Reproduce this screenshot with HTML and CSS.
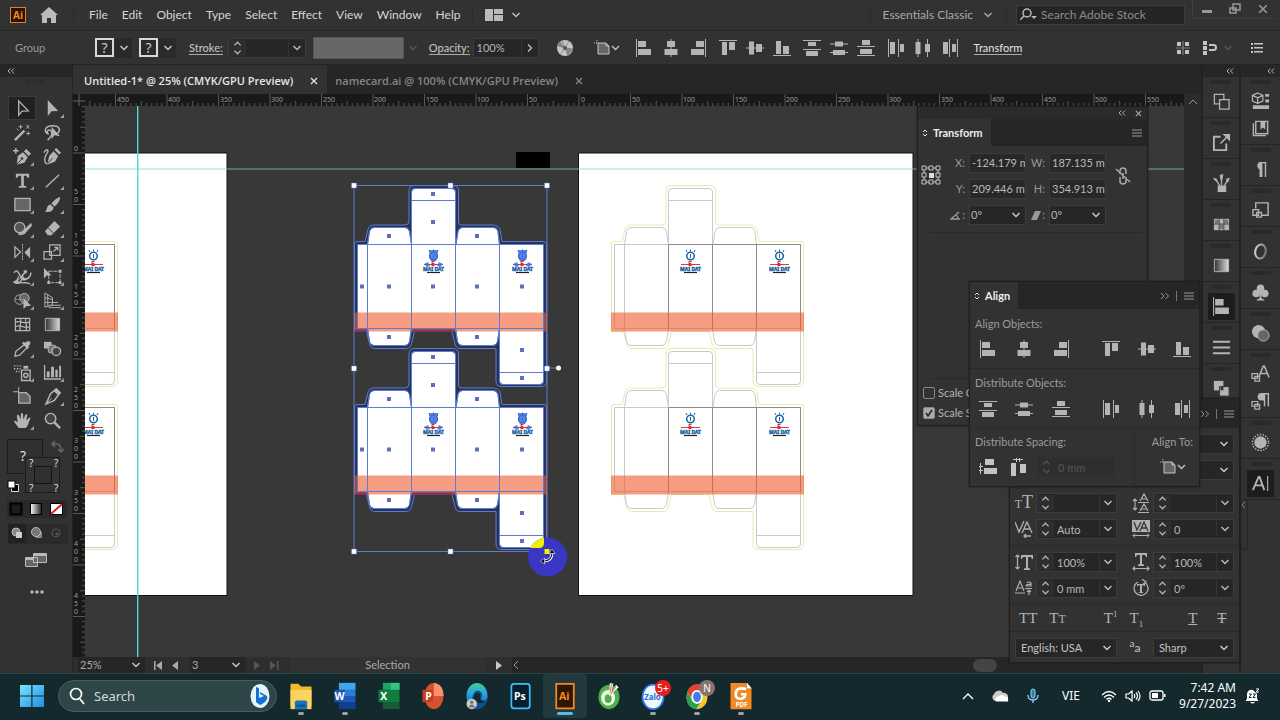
FILE: index.html
```
<!DOCTYPE html>
<html lang="en">
<head>
<meta charset="utf-8">
<title>Untitled-1* @ 25% (CMYK/GPU Preview)</title>
<link rel="stylesheet" href="styles.css">
</head>
<body>
<svg class="sprite" aria-hidden="true">
  <defs>
    <linearGradient id="grad"><stop offset="0" stop-color="#333"/><stop offset="1" stop-color="#ddd"/></linearGradient>
    <linearGradient id="gradw"><stop offset="0" stop-color="#fff"/><stop offset="1" stop-color="#222"/></linearGradient>
    <linearGradient id="grado"><stop offset="0" stop-color="#ccc"/><stop offset="1" stop-color="#777"/></linearGradient>
    <linearGradient id="win" x2="1" y2="1"><stop offset="0" stop-color="#7fe3fb"/><stop offset="1" stop-color="#1a8fe6"/></linearGradient>
    <linearGradient id="edge" x2="0" y2="1"><stop offset="0" stop-color="#3fcf8f"/><stop offset=".4" stop-color="#2ba6e0"/><stop offset="1" stop-color="#0c59a4"/></linearGradient>
  </defs>
  <symbol id="chev" viewBox="0 0 10 10"><path d="M1.5 3 5 6.5 8.500 3" fill="none" stroke="currentColor" stroke-width="1.5"/></symbol>
  <symbol id="spin" viewBox="0 0 10 18"><path d="M1.500 6 5 2.500 8.500 6M1.500 12 5 15.500 8.500 12" fill="none" stroke="currentColor" stroke-width="1.4"/></symbol>
  <symbol id="dbl-l" viewBox="0 0 8 6"><path d="M3.500.500 1 3l2.500 2.500M7 .500 4.500 3 7 5.500" fill="none" stroke="currentColor"/></symbol>
  <symbol id="dbl-r" viewBox="0 0 10 8"><path d="M1 1l3 3-3 3M5.500 1l3 3-3 3" fill="none" stroke="currentColor"/></symbol>
  <symbol id="cross" viewBox="0 0 8 8"><path d="M1 1l6 6M7 1 1 7" fill="none" stroke="currentColor" stroke-width="1.3"/></symbol>
  <symbol id="burger" viewBox="0 0 10 8"><path d="M0 1h10M0 4h10M0 7h10" stroke="currentColor"/></symbol>
  <symbol id="updown" viewBox="0 0 6 8"><path d="M1 3 3 1l2 2M1 5l2 2 2-2" fill="none" stroke="currentColor"/></symbol>

  <symbol id="a-l" viewBox="0 0 18 18"><path d="M1 0h1v18H1zM3 2h8v6H3zM3 10h13v6H3z"/></symbol>
  <symbol id="a-c" viewBox="0 0 18 18"><path d="M8.500 0h1v18h-1zM5 2h8v6H5zM2.500 10h13v6h-13z"/></symbol>
  <symbol id="a-r" viewBox="0 0 18 18"><path d="M16 0h1v18h-1zM7 2h8v6H7zM2 10h13v6H2z"/></symbol>
  <symbol id="a-t" viewBox="0 0 18 18"><path d="M0 1h18v1H0zM3 3h5v13H3zM10 3h6v8h-6z"/></symbol>
  <symbol id="a-m" viewBox="0 0 18 18"><path d="M0 8.500h18v1H0zM3 2.500h5v13H3zM10 5h6v8h-6z"/></symbol>
  <symbol id="a-b" viewBox="0 0 18 18"><path d="M0 16h18v1H0zM3 2h5v13H3zM10 7h6v8h-6z"/></symbol>
  <symbol id="d-t" viewBox="0 0 18 18"><path d="M0 1h18v1H0zM5 3h8v4H5zM0 10h18v1H0zM3 12h12v5H3z"/></symbol>
  <symbol id="d-m" viewBox="0 0 18 18"><path d="M0 4.500h18v1H0zM5 2.500h8v5H5zM0 13h18v1H0zM3 11h12v5H3z"/></symbol>
  <symbol id="d-b" viewBox="0 0 18 18"><path d="M0 7h18v1H0zM5 1h8v5H5zM0 16h18v1H0zM3 10h12v5H3z"/></symbol>
  <symbol id="d-l" viewBox="0 0 18 18"><path d="M1 0h1v18H1zM3 3h5v12H3zM11 0h1v18h-1zM13 5h4v8h-4z"/></symbol>
  <symbol id="d-c" viewBox="0 0 18 18"><path d="M3.500 0h1v18h-1zM1.500 3h5v12h-5zM13 0h1v18h-1zM11 5h5v8h-5z"/></symbol>
  <symbol id="d-r" viewBox="0 0 18 18"><path d="M8 0h1v18H8zM2 3h5v12H2zM16 0h1v18h-1zM11 5h4v8h-4z"/></symbol>
  <symbol id="s-v" viewBox="0 0 18 18"><path d="M6 1h9v6H6zM5 10h13v6H5zM0 8h4v1H0zM0 12h4v1H0zM1 5h1v11H1z"/></symbol>
  <symbol id="s-h" viewBox="0 0 18 18"><path d="M1 5h5v13H1zM10 6h6v9h-6zM3 1h10v1H3zM6 0h1v4H6zM9 0h1v4H9z"/></symbol>
  <symbol id="artb" viewBox="0 0 26 18"><path d="M3 1v3M0 4h3" stroke="currentColor" stroke-dasharray="1 1"/><path d="M4 4h8l3 3v8H4z" fill="#666" stroke="currentColor"/><path d="M12 4v3h3" fill="none" stroke="currentColor"/><path d="M18 7l3.500 3.500L25 7" fill="none" stroke="currentColor" stroke-width="1.4"/></symbol>

  <symbol id="t-sel" viewBox="0 0 20 20"><path d="M6 2v15l3.600-4.200 6.400-.3z" fill="none" stroke="currentColor" stroke-width="1.400"/></symbol>
  <symbol id="t-dir" viewBox="0 0 20 20"><path d="M5 1v17l4-5 7-.300z"/></symbol>
  <symbol id="t-wand" viewBox="0 0 20 20"><path d="M2 18 12 8" stroke="currentColor" stroke-width="2.500"/><path d="M8 2v4M6 4h4M16 9v4M14 11h4M14 2l3 4M17 2l-3 4M4 6l2 2" stroke="currentColor"/></symbol>
  <symbol id="t-lasso" viewBox="0 0 20 20"><path d="M6 12C0 9 2 3 10 3s9 5 5 8M6 12c-4-3 1-7 3-3s-2 6-4 9" fill="none" stroke="currentColor" stroke-width="1.600"/><path d="M9 4v13l3-4 6 1z"/></symbol>
  <symbol id="t-pen" viewBox="0 0 20 20"><path d="M0 4h6M3 1v6" stroke="currentColor" stroke-width="1.500"/><path d="m14 2 5 5-2.500 2.500-5-5zM10.500 5.500l5 5-3.500 6-8 2 1-9z"/><path d="m4 18 5-5" stroke="#333"/><circle cx="9.500" cy="12" r="1.300" fill="#333"/></symbol>
  <symbol id="t-curv" viewBox="0 0 20 20"><path d="M1 6c3-5 6-3 3 1s-3 9 0 11" fill="none" stroke="currentColor" stroke-width="1.500"/><path d="m14 1 5 5-2 2-5-5zM11 4.500l5 5-3.500 6-8 3 2-9z"/><path d="m5 17 5-5" stroke="#333"/></symbol>
  <symbol id="t-type" viewBox="0 0 20 20"><path d="M3 3h14v4h-1.500L14 5h-2.600v10.500L14 16v1.500H6V16l2.600-.500V5H6L4.500 7H3z"/></symbol>
  <symbol id="t-line" viewBox="0 0 20 20"><path d="M3 17 17 4" stroke="currentColor" stroke-width="1.500"/></symbol>
  <symbol id="t-rect" viewBox="0 0 20 20"><path d="M2 3.500h16v13H2z" fill="#666" stroke="currentColor" stroke-width="1.400"/></symbol>
  <symbol id="t-brush" viewBox="0 0 20 20"><path d="M18 2c-4 1-8 5-9 7l3 3c3-2 6-6 6-10zM8 10l3 3c0 5-5 5-9 5 3-2 1-7 6-8z"/></symbol>
  <symbol id="t-shaper" viewBox="0 0 20 20"><circle cx="7" cy="9" r="5.500" fill="#555" stroke="currentColor" stroke-width="1.400"/><path d="m19 4-9 9-5 3 2 1 5-1 8-9z"/></symbol>
  <symbol id="t-eraser" viewBox="0 0 20 20"><path d="m12 2 6 6-9 9H5l-3-4z"/><path d="m5.500 9.500 6 6" stroke="#333"/></symbol>
  <symbol id="t-refl" viewBox="0 0 20 20"><path d="M2 4v11l6-5.500z" fill="none" stroke="currentColor" stroke-width="1.300"/><path d="M18 4v12l-6-6z"/><path d="M10 1v17" stroke="currentColor" stroke-dasharray="2 1"/></symbol>
  <symbol id="t-scale" viewBox="0 0 20 20"><path d="M7 2h11v11H7zM1 9h8v8H1zM11 9l4-4M12 4.500h3.500V8" fill="none" stroke="currentColor" stroke-width="1.300"/></symbol>
  <symbol id="t-width" viewBox="0 0 20 20"><path d="M1 6c5-6 6 6 8 4s4-4 4-6M19 6c-1 7-7 9-9 4-1 6-4 9-9 6 4-1 4-4 5-6M5 16c5 2 10-1 13 2" fill="none" stroke="currentColor" stroke-width="1.500"/><path d="M8 12c2-4 7 4 9-4-1 7-6 8-9 4z"/><path d="M3 17 14 4" stroke="currentColor" stroke-width="1"/><circle cx="4" cy="16" r="1.900"/><circle cx="13" cy="5" r="1.900"/></symbol>
  <symbol id="t-free" viewBox="0 0 20 20"><path d="M1 1v11l3-3h5z"/><path d="M6 4.500h12v12H6z" fill="none" stroke="currentColor" stroke-dasharray="4 1"/><path d="M16.500 3h3v3h-3zM16.500 15h3v3h-3zM4.500 15h3v3h-3z"/></symbol>
  <symbol id="t-shape" viewBox="0 0 20 20"><circle cx="7" cy="9" r="5" fill="none" stroke="currentColor"/><circle cx="12" cy="7.500" r="5" fill="#666" stroke="currentColor"/><path d="M3 9h8" stroke="currentColor" stroke-dasharray="1 1"/><path d="M11 7v12l3-3 5-.500z"/></symbol>
  <symbol id="t-persp" viewBox="0 0 20 20"><path d="M2 2v15l8-2V7zM5 4v12M2 7l8 2M2 12h8M10 12h6M6 15h13M6 17.500h13" fill="none" stroke="currentColor"/></symbol>
  <symbol id="t-mesh" viewBox="0 0 20 20"><path d="M2.500 3.500h15v13h-15zM2 8c6-4 9 3 16-1M2 13c5-5 10 3 16-1M7 3c4 4-2 9 1 14M14 3c-3 5 3 8-1 14" fill="none" stroke="currentColor" stroke-width="1.300"/></symbol>
  <symbol id="t-grad" viewBox="0 0 20 20"><path d="M2.500 3.500h15v13h-15z" fill="url(#grad)" stroke="currentColor"/></symbol>
  <symbol id="t-eye" viewBox="0 0 20 20"><path d="m12 6 3 3-8 8-5 1 1-5z" fill="none" stroke="currentColor" stroke-width="1.400"/><path d="m14 3 3-1 1.500 2L17 7l-1 1 1 1-1.500 1.500-6-6L11 3l1 1z"/></symbol>
  <symbol id="t-blend" viewBox="0 0 20 20"><path d="M1 3h8v7H1z"/><rect x="5.500" y="6.500" width="8" height="8" rx="2" fill="#777" stroke="currentColor"/><circle cx="14" cy="13" r="4.500" fill="#444" stroke="currentColor" stroke-width="1.400"/></symbol>
  <symbol id="t-spray" viewBox="0 0 20 20"><path d="M9 7.500h9v11H9z" fill="none" stroke="currentColor" stroke-width="1.500"/><path d="M11 3h5v3h-5z"/><circle cx="13.500" cy="13" r="2.200" fill="none" stroke="currentColor" stroke-width="1.500"/><path d="M1 3h9M1 6h7M3 9h4" stroke="currentColor" stroke-width="1.500" stroke-dasharray="1.500 1.500"/></symbol>
  <symbol id="t-graph" viewBox="0 0 20 20"><path d="M1 2h1.400v14H19v1.500H1zM4 9h3v6H4zM8.500 4h3v11h-3zM13 7h2.500v8H13zM17 3h2v12h-2z"/></symbol>
  <symbol id="t-artb" viewBox="0 0 20 20"><path d="M6 0v6M0 5h6" stroke="currentColor"/><path d="M6 6h8l4 4v7H6z" fill="#666" stroke="currentColor" stroke-width="1.300"/></symbol>
  <symbol id="t-slice" viewBox="0 0 20 20"><path d="m14 2 4 4-6 8-9 4 5-11z" fill="none" stroke="currentColor" stroke-width="1.500"/><path d="m14 1 5 5-3 3-5-5z"/><path d="m2 19 7-7" stroke="currentColor"/></symbol>
  <symbol id="t-hand" viewBox="0 0 20 20"><path d="M6 18 1 11c1-2 3 0 4 1L4 5c1-2 2-1 2.500 0L8 9l.300-6c1-1.500 2-1 2.200 0L11 9l2-5c1-1.300 2-.500 2 .500L14 10l3-3c1-.500 2 .500 1 1.500-2 4-2 8-5 9.500z"/></symbol>
  <symbol id="t-zoom" viewBox="0 0 20 20"><circle cx="8" cy="8" r="5.500" fill="#444" stroke="currentColor" stroke-width="1.500"/><path d="m12 12 6 6" stroke="currentColor" stroke-width="2.500"/></symbol>

  <symbol id="p-path" viewBox="0 0 20 20"><path d="M2.500 2.500h10v10h-10z" fill="none" stroke="currentColor" stroke-width="1.300"/><path d="M8 8h10v10H8z" fill="#333" stroke="currentColor" stroke-width="1.300"/></symbol>
  <symbol id="p-exp" viewBox="0 0 20 20"><path d="M9 4H2v14h13v-7" fill="none" stroke="currentColor" stroke-width="2"/><path d="m9 11 7-7" stroke="currentColor" stroke-width="1.600"/><path d="M11 1h8v8z"/></symbol>
  <symbol id="p-brush" viewBox="0 0 20 20"><path d="M6 12h9v7H6z"/><path d="M8 12 4 6M10 12V4M13 12l4-6" stroke="currentColor" stroke-width="1.400"/><path d="M8 1l4-1-1 6H9zM1 4l4 1 1 3-3-1zM15 5l4-1-2 5-2-1z"/></symbol>
  <symbol id="p-swatch" viewBox="0 0 20 20"><path d="M2 4h16v12H2z"/><path d="M3 5h4v4H3zM13 5h4v4h-4zM8 10h4v5H8z" fill="#777"/><path d="M2 9.500h16M7.500 4v12M12.500 4v12" stroke="#444"/></symbol>
  <symbol id="p-stroke" viewBox="0 0 20 20"><path d="M1 4h18M1 10h18M1 16h18" stroke="currentColor" stroke-width="2"/></symbol>
  <symbol id="p-pathf" viewBox="0 0 20 20"><path d="M2 2h10v10H2z"/><path d="M8 8h10v10H8z" stroke="#333"/><path d="M9 8h3v4H9z" fill="#333"/></symbol>
  <symbol id="p-prop" viewBox="0 0 20 20"><path d="m7 1 5.500 2.500v6L7 12 1.500 9.500v-6zM1.500 3.500 7 6l5.500-2.500M7 6v6" fill="none" stroke="currentColor" stroke-width="1.300"/><path d="M15 2h4v3h-4zM15 8h4v3h-4zM2 14h17v4H2z"/></symbol>
  <symbol id="p-lib" viewBox="0 0 20 20"><path d="M2.500 4.500v13h13M5 2.500h12.500v13H5z" fill="none" stroke="currentColor" stroke-width="1.500"/><path d="M10 3h5v8l-2.500-2L10 11z"/></symbol>
  <symbol id="p-para" viewBox="0 0 20 20"><path d="M9 10a4.500 4.500 0 0 1 0-8h7v16h-1.500V3.500H12V18H9z"/></symbol>
  <symbol id="p-asset" viewBox="0 0 20 20"><path d="M5 8V2h13v13h-7" fill="none" stroke="currentColor" stroke-width="1.500"/><path d="M2 9h6v6H2zM6 12h5v5H6z" fill="#333" stroke="currentColor" stroke-width="1.400"/></symbol>
  <symbol id="p-o" viewBox="0 0 20 20"><ellipse cx="10" cy="10" rx="5.500" ry="7.500" fill="none" stroke="url(#grado)" stroke-width="2.200" transform="rotate(12 10 10)"/></symbol>
  <symbol id="p-club" viewBox="0 0 20 20"><circle cx="10" cy="5.500" r="4"/><circle cx="5.500" cy="11" r="4"/><circle cx="14.500" cy="11" r="4"/><path d="M9 8h2v8l3 1.500v1H6v-1L9 16z"/></symbol>
  <symbol id="p-trans" viewBox="0 0 20 20"><circle cx="8" cy="8" r="7"/><circle cx="13" cy="12" r="6" fill="#666" stroke="currentColor"/></symbol>
  <symbol id="p-cha" viewBox="0 0 20 20"><path d="m8 13 5-12h1l5 12M10 9h7" fill="none" stroke="currentColor" stroke-width="1.600"/><path d="M1 9h6v5H1zM4 12h5v5H4z" fill="#333" stroke="currentColor" stroke-width="1.300"/></symbol>
  <symbol id="p-paras" viewBox="0 0 20 20"><path d="M11 9a4 4 0 0 1 0-8h8v14h-1.500V2.500H15V15h-1.500V9z"/><path d="M1 10h6v5H1zM4 13h5v5H4z" fill="#333" stroke="currentColor" stroke-width="1.300"/></symbol>
  <symbol id="p-app" viewBox="0 0 20 20"><circle cx="10" cy="10" r="6.500"/><circle cx="10" cy="10" r="8.500" fill="none" stroke="currentColor" stroke-width="1.500" stroke-dasharray="1.500 1.500"/></symbol>
  <symbol id="p-char" viewBox="0 0 20 20"><path d="m2 17 6-14h1l5 14M4 12h8" fill="none" stroke="currentColor" stroke-width="2"/><path d="M17.500 2v16" stroke="currentColor" stroke-width="1.200"/></symbol>
</svg>

<header class="menubar">
  <span class="ai-badge">Ai</span>
  <button class="ib home" aria-label="Home"><svg width="18" height="16" viewBox="0 0 18 16"><path d="M9 0 0 8h2v8h5v-5h4v5h5V8h2z"/></svg></button>
  <nav class="menu">
    <button>File</button><button>Edit</button><button>Object</button><button>Type</button><button>Select</button><button>Effect</button><button>View</button><button>Window</button><button>Help</button>
  </nav>
  <button class="ib layout" aria-label="Arrange documents"><svg width="18" height="12" viewBox="0 0 18 12"><path d="M0 0h8v12H0zM9 0h9v5H9zM9 6h9v6H9z"/></svg><svg width="10" height="10"><use href="#chev"/></svg></button>
  <div class="menubar-end">
    <button class="workspace-switch">Essentials Classic <svg width="10" height="10"><use href="#chev"/></svg></button>
    <label class="stock"><svg width="18" height="14" viewBox="0 0 18 14"><circle cx="7" cy="5" r="4" fill="none" stroke="currentColor" stroke-width="1.500"/><path d="M4 8 0 12" stroke="currentColor" stroke-width="1.500"/><path d="M11 8h6l-3 3z"/></svg><input type="text" placeholder="Search Adobe Stock" aria-label="Search Adobe Stock"></label>
    <div class="winctl">
      <button aria-label="Minimize"><svg width="12" height="12"><path d="M1 7h10v3H1z"/></svg></button>
      <button aria-label="Restore"><svg width="12" height="12"><path d="M4 1h7v6H4zM1 5h6v5H1z" fill="none" stroke="currentColor" stroke-width="1.500"/></svg></button>
      <button aria-label="Close"><svg width="10" height="10" viewBox="0 0 8 8"><use href="#cross"/></svg></button>
    </div>
  </div>
</header>

<section class="control">
  <span class="ctx">Group</span>
  <button class="qm" aria-label="Fill"><b>?</b><svg width="10" height="10"><use href="#chev"/></svg></button>
  <button class="qm" aria-label="Stroke color"><b>?</b><svg width="10" height="10"><use href="#chev"/></svg></button>
  <label class="u stroke-label" for="strokew">Stroke:</label>
  <span class="combo stroke-combo"><svg class="sp" width="10" height="18"><use href="#spin"/></svg><input id="strokew" type="text"><button aria-label="Stroke options"><svg width="10" height="10"><use href="#chev"/></svg></button></span>
  <span class="profile"></span><svg class="dim" width="10" height="10"><use href="#chev"/></svg>
  <label class="u opacity-label" for="opac">Opacity:</label>
  <span class="combo opacity"><input id="opac" type="text" value="100%"><button aria-label="Opacity slider"><svg class="turn" width="10" height="10"><use href="#chev"/></svg></button></span>
  <button class="ib globe" aria-label="Recolor"><svg width="18" height="18" viewBox="0 0 18 18"><circle cx="9" cy="9" r="8"/><path d="m9 9 8 1-5 7zM9 9 4 2 1 7z" fill="#888"/><path d="M9 9 1 6M9 9l-5 7M9 9l3 8M9 9l8 1M9 9l4-7M9 9 6 1" stroke="#777" stroke-width=".7"/><circle cx="9" cy="9" r="2" fill="#555"/></svg></button>
  <button class="ib" aria-label="Align to"><svg width="26" height="18"><use href="#artb"/></svg></button>
  <div class="aligns">
    <button aria-label="Align left"><svg><use href="#a-l"/></svg></button><button aria-label="Align center"><svg><use href="#a-c"/></svg></button><button aria-label="Align right"><svg><use href="#a-r"/></svg></button>
  </div>
  <div class="aligns">
    <button aria-label="Align top"><svg><use href="#a-t"/></svg></button><button aria-label="Align middle"><svg><use href="#a-m"/></svg></button><button aria-label="Align bottom"><svg><use href="#a-b"/></svg></button>
  </div>
  <div class="aligns">
    <button aria-label="Distribute top"><svg><use href="#d-t"/></svg></button><button aria-label="Distribute middle"><svg><use href="#d-m"/></svg></button><button aria-label="Distribute bottom"><svg><use href="#d-b"/></svg></button>
  </div>
  <div class="aligns">
    <button aria-label="Distribute left"><svg><use href="#d-l"/></svg></button><button aria-label="Distribute center"><svg><use href="#d-c"/></svg></button><button aria-label="Distribute right"><svg><use href="#d-r"/></svg></button>
  </div>
  <button class="u bright">Transform</button>
  <div class="control-end">
    <svg width="14" height="14" viewBox="0 0 14 14"><path d="M1 1h4v4H1zM9 1h4v4H9zM1 9h4v4H1zM9 9h4v4H9zM6.700 0h.6v14h-.6zM0 6.700h14v.6H0z"/></svg>
    <svg class="magnet" width="16" height="14" viewBox="0 0 16 14"><path d="M1 0h4v4H1zM1 5h4v4H1zM1 10h4v4H1z"/><path d="M7 4h4.500a2.500 2.500 0 0 1 0 5H7" fill="none" stroke="currentColor" stroke-width="2"/></svg>
    <svg class="dim" width="10" height="10"><use href="#chev"/></svg>
    <svg class="list" width="12" height="10" viewBox="0 0 12 10"><path d="M0 0h2v2H0zM0 4h2v2H0zM0 8h2v2H0zM3 0h9v1.500H3zM3 4h9v1.500H3zM3 8h9v1.500H3z"/></svg>
  </div>
</section>

<main class="work">
  <aside class="tools">
    <div class="collapse"><svg width="8" height="6"><use href="#dbl-l"/></svg></div>
    <div class="grip"></div>
    <div class="toolgrid">
      <button class="on" aria-label="Selection"><svg><use href="#t-sel"/></svg></button><button class="m" aria-label="Direct selection"><svg><use href="#t-dir"/></svg></button>
      <button aria-label="Magic wand"><svg><use href="#t-wand"/></svg></button><button aria-label="Lasso"><svg><use href="#t-lasso"/></svg></button>
      <button class="m" aria-label="Pen"><svg><use href="#t-pen"/></svg></button><button aria-label="Curvature"><svg><use href="#t-curv"/></svg></button>
      <button class="m" aria-label="Type"><svg><use href="#t-type"/></svg></button><button class="m" aria-label="Line"><svg><use href="#t-line"/></svg></button>
      <button class="m" aria-label="Rectangle"><svg><use href="#t-rect"/></svg></button><button class="m" aria-label="Paintbrush"><svg><use href="#t-brush"/></svg></button>
      <button class="m" aria-label="Shaper"><svg><use href="#t-shaper"/></svg></button><button class="m" aria-label="Eraser"><svg><use href="#t-eraser"/></svg></button>
      <button class="m" aria-label="Reflect"><svg><use href="#t-refl"/></svg></button><button class="m" aria-label="Scale"><svg><use href="#t-scale"/></svg></button>
      <button class="m" aria-label="Width"><svg><use href="#t-width"/></svg></button><button class="m" aria-label="Free transform"><svg><use href="#t-free"/></svg></button>
      <button class="m" aria-label="Shape builder"><svg><use href="#t-shape"/></svg></button><button class="m" aria-label="Perspective grid"><svg><use href="#t-persp"/></svg></button>
      <button aria-label="Mesh"><svg><use href="#t-mesh"/></svg></button><button aria-label="Gradient"><svg><use href="#t-grad"/></svg></button>
      <button class="m" aria-label="Eyedropper"><svg><use href="#t-eye"/></svg></button><button aria-label="Blend"><svg><use href="#t-blend"/></svg></button>
      <button class="m" aria-label="Symbol sprayer"><svg><use href="#t-spray"/></svg></button><button class="m" aria-label="Column graph"><svg><use href="#t-graph"/></svg></button>
      <button aria-label="Artboard"><svg><use href="#t-artb"/></svg></button><button class="m" aria-label="Slice"><svg><use href="#t-slice"/></svg></button>
      <button class="m" aria-label="Hand"><svg><use href="#t-hand"/></svg></button><button aria-label="Zoom"><svg><use href="#t-zoom"/></svg></button>
    </div>
    <svg class="swatches" width="58" height="60" viewBox="0 0 58 60">
      <path d="M.5 3.500h35v34H.5z" fill="#303030" stroke="#1c1c1c"/>
      <text x="13" y="25" class="q big">?</text>
      <path d="M18.500 21.500h34v35h-34z" fill="#333" stroke="#1c1c1c"/><path d="M27.500 30.500h17v17h-17z" fill="#303030" stroke="#141414"/>
      <text x="22" y="31" class="q">?</text><text x="47" y="31" class="q">?</text><text x="22" y="56" class="q">?</text><text x="47" y="56" class="q">?</text>
      <path d="M46 8c6-1 8 1 8 7M48 5l-3 3 3 3M51 13l3 3 3-3" fill="none" stroke="#666" stroke-width="1.500"/>
      <path d="M4.500 48.500h7v7h-7z" fill="#000" stroke="#ddd"/><path d="M1 45h7v7H1z" fill="#fff" stroke="#000"/>
    </svg>
    <svg class="modes" width="60" height="18" viewBox="0 0 60 18">
      <path d="M3.500 3.500h11v11h-11z" fill="#1d1d1d" stroke="#000" stroke-width="2"/><path d="M23.500 3.500h11v11h-11z" fill="url(#gradw)" stroke="#000"/><path d="M43.500 3.500h12v11h-12z" fill="#fff" stroke="#000"/><path d="m44 14 11-10" stroke="#d22" stroke-width="2"/>
    </svg>
    <svg class="draws" width="60" height="20" viewBox="0 0 60 20">
      <path d="M0 0h18v19H0z" fill="#222"/><circle cx="8" cy="8" r="4" fill="#888" stroke="#bbb"/><path d="M8 8h6v6H8z" fill="#ccc"/>
      <path d="M28 8h6v6h-6z" fill="#888"/><circle cx="28" cy="8" r="4.500" fill="#777" stroke="#bbb"/><circle cx="48" cy="9" r="4" fill="none" stroke="#555"/><circle cx="49" cy="10" r="1.500" fill="#555"/>
    </svg>
    <svg class="screen" width="22" height="16" viewBox="0 0 22 16"><path d="M.5 5.500h12v9H.5zM8.500 1.500h13v9h-13z" fill="#666" stroke="#bbb"/><path d="M1 6h8v2H1zM9 2h12v2H9z" fill="#bbb"/></svg>
    <svg class="more" width="16" height="4"><circle cx="3" cy="2" r="1.800"/><circle cx="8" cy="2" r="1.800"/><circle cx="13" cy="2" r="1.800"/></svg>
  </aside>

  <section class="doc">
    <div class="tabs">
      <div class="tab active">Untitled-1* @ 25% (CMYK/GPU Preview) <button aria-label="Close tab"><svg width="8" height="8"><use href="#cross"/></svg></button></div>
      <div class="tab">namecard.ai @ 100% (CMYK/GPU Preview) <button aria-label="Close tab"><svg width="8" height="8"><use href="#cross"/></svg></button></div>
    </div>
    <div class="sheet">
      <svg class="hruler">
        <defs><pattern id="ht" x="578.500" y="0" width="51.500" height="12" patternUnits="userSpaceOnUse"><path d="M.5 0v12M5.600 9v3M10.800 9v3M15.900 9v3M21.100 9v3M26.200 7v5M31.400 9v3M36.500 9v3M41.700 9v3M46.800 9v3" stroke="#747474" stroke-width=".7"/></pattern></defs>
        <g transform="translate(-73 0)"><rect x="85" width="3000" height="12" fill="url(#ht)"/><path d="M79 0v12M73 7h12" stroke="#666"/>
        <g class="rl"><text x="117" y="8">450</text><text x="168" y="8">400</text><text x="220" y="8">350</text><text x="271" y="8">300</text><text x="323" y="8">250</text><text x="374" y="8">200</text><text x="426" y="8">150</text><text x="477" y="8">100</text><text x="529" y="8">50</text><text x="581" y="8">0</text><text x="632" y="8">50</text><text x="683" y="8">100</text><text x="735" y="8">150</text><text x="786" y="8">200</text><text x="838" y="8">250</text><text x="889" y="8">300</text><text x="941" y="8">350</text><text x="992" y="8">400</text><text x="1044" y="8">450</text><text x="1095" y="8">500</text><text x="1147" y="8">550</text></g></g>
      </svg>
      <svg class="vscroll"><path d="M5 10l4-4 4 4" fill="none" stroke="#999"/></svg>
      <svg class="vruler">
        <defs><pattern id="vt" x="0" y="152.500" width="12" height="51.500" patternUnits="userSpaceOnUse"><path d="M0 .5h12M9 5.600h3M9 10.800h3M9 15.900h3M9 21.100h3M7 26.200h5M9 31.400h3M9 36.500h3M9 41.700h3M9 46.800h3" stroke="#747474" stroke-width=".7"/></pattern></defs>
        <g transform="translate(0 -106)"><rect y="106" width="12" height="3000" fill="url(#vt)"/>
        <g class="rl"><text x="1" y="151">0</text><text x="1" y="194">5</text><text x="1" y="202">0</text><text x="1" y="238">1</text><text x="1" y="246">0</text><text x="1" y="254">0</text><text x="1" y="289">1</text><text x="1" y="297">5</text><text x="1" y="305">0</text><text x="1" y="340">2</text><text x="1" y="348">0</text><text x="1" y="356">0</text><text x="1" y="392">2</text><text x="1" y="400">5</text><text x="1" y="408">0</text><text x="1" y="443">3</text><text x="1" y="451">0</text><text x="1" y="459">0</text><text x="1" y="495">3</text><text x="1" y="503">5</text><text x="1" y="511">0</text><text x="1" y="546">4</text><text x="1" y="554">0</text><text x="1" y="562">0</text><text x="1" y="598">4</text><text x="1" y="606">5</text><text x="1" y="614">0</text></g></g>
      </svg>
      <svg class="canvas" role="img" aria-label="Artboards with box die-lines">
        <defs>
          <path id="outer" d="M611.500 331.500V244q0-2.500 2.500-2.500h8l3-12q1-4.500 6-4.500h31q4 0 4-4v-30q0-5.500 5.500-5.500h38q6 0 6 5.500v31q0 3 3 3h31q6 0 7.500 4.500l2 12h41q3.500 0 3.500 3V381q0 5.500-5.500 5.500h-39q-6 0-6-5.500v-32.500h-36q-4 0-5-5l-3-12h-37.500l-3 12q-1 5-5 5h-32q-4 0-5-5l-3-12z"/>
          <g id="panels">
            <path d="M614.500 244.500h10v84h-10zM624.500 244.500h44v84h-44zM668.500 244.500h44v84h-44zM712.500 244.500h44v84h-44zM756.500 244.500h44v84h-44z"/>
            <path d="M668.500 244.500V192q0-3.500 3.500-3.500h37q3.500 0 3.500 3.500v52.500M668.500 200.500h44"/>
            <path d="M624.500 244.500l2-13q1-4 4.500-4h31q3.500 0 4.500 4l2 13M713 244.500l2-13q1-4 4.500-4h31q3.500 0 4.500 4l1.500 13M624.500 328.500l2 13q1 4 4.500 4h31q3.500 0 4.500-4l2-13M712.500 328.500l2 13q1 4 4.500 4h31q3.500 0 4.500-4l2-13M756.500 328.500V381q0 3.500 3.500 3.500h37q3.500 0 3.500-3.500v-52.500M756.500 372.500h44"/>
          </g>
          <g id="mark"><circle cx="690.500" cy="256" r="3.800" fill="none" stroke="#1763a6" stroke-width="1.500"/><path d="M690.500 254v4M690.500 251.500v-2M687 252l-1-2M694 252l1-2" stroke="#1763a6"/><path d="M681 264.500h19" stroke="#d83a34"/><text x="688" y="266" class="e">E</text><text x="680" y="271" class="mai">MAI DAT</text><path d="M684 272.500h13" stroke="#222" stroke-width="1.200"/></g>
          <path id="band" d="M611 312.500h193v19H611z" fill="#f05a2c" fill-opacity=".6"/>
          <g id="flat"><use href="#outer" fill="none" stroke="#eceaa9"/><use href="#panels" fill="none" stroke="#c9c9cf"/><path d="M668.500 329v-84.500h44V329M712.500 244.500h44V329M756.500 244.500h44V329" fill="none" stroke="#8c8c90"/><use href="#mark"/><use href="#mark" x="89"/><use href="#band"/></g>
          <g id="dots" fill="#5a6fc4"><path d="M617 284.500h4v4h-4zM644 284.500h4v4h-4zM688 284.500h4v4h-4zM732 284.500h4v4h-4zM777 284.500h4v4h-4zM644 234h4v4h-4zM732 234h4v4h-4zM688 192h4v4h-4zM688 220h4v4h-4zM644 335h4v4h-4zM732 335h4v4h-4zM777 348h4v4h-4zM777 376h4v4h-4z"/></g>
          <g id="picked"><use href="#outer" fill="#293257" stroke="#5c7cd0"/><use href="#panels" fill="#fff" stroke="#4d6fd0"/><use href="#mark"/><use href="#mark" x="89"/><g id="pm" fill="#3f6fe0" fill-opacity=".85"><path d="M686 250h9v3l-1.500 1 1.500 3-2 4h-5l-2-4 1.500-3-1.500-1zM681 264l4-2 1 2 1 2-3 1zM700 264l-4-2-1 2-1 2 3 1z"/></g><use href="#pm" x="89"/><use href="#band"/><use href="#panels" fill="none" stroke="#5c7cd0"/><path d="M611.500 331h12M671 331h38" stroke="#8c2f5c" stroke-width="2"/><use href="#dots"/></g>
          <clipPath id="inbox"><path d="M499 492h45v51q0 5-5 5h-40z"/></clipPath>
        </defs>
        <g transform="translate(-85 -106)">
          <path d="M0 153h227v442.500H0zM578.500 153H913v442.500H578.500z" fill="#fff" stroke="#111"/>
          <path d="M516 152h34v16h-34z" fill="#000"/>
          <use href="#flat" x="-686"/><use href="#flat" x="-686" y="163"/>
          <use href="#flat"/><use href="#flat" y="163"/>
          <use href="#picked" x="-257"/><use href="#picked" x="-257" y="163"/>
          <path d="M85 169h1100" stroke="#5fe3e3" stroke-opacity=".5" stroke-width="1.600"/><path d="M137 106h1.400v560H137z" fill="#45dccf"/>
          <path d="M354 185.500h193v366H354zM547 368h11" fill="none" stroke="#5c7cd0"/>
          <circle cx="547.500" cy="557" r="19.500" fill="#3a37c4"/>
          <circle cx="547.500" cy="557" r="19.500" fill="#f1f100" clip-path="url(#inbox)"/>
          <path d="M351.500 183h5v5h-5zM448 183h5v5h-5zM544.500 183h5v5h-5zM351.500 366h5v5h-5zM544.500 366h5v5h-5zM351.500 549h5v5h-5zM448 549h5v5h-5z" fill="#fff" stroke="#5c7cd0" stroke-width=".5"/><circle cx="558.500" cy="368" r="2.500" fill="#fff"/>
          <path d="M544.500 549h5v5h-5z" fill="#f1f100"/>
          <path d="M552 552c0 6-2 9-8 9" fill="none" stroke="#fff" stroke-width="3"/><path d="M552 552c0 6-2 9-8 9" fill="none" stroke="#223" stroke-width="1.200"/><path d="m549 553.500 3-4 3 4zM544.500 558l-4 3 4 3z" fill="#000" stroke="#fff" stroke-width=".6"/>
        </g>
      </svg>
      <div class="vtrack"></div>
    </div>
    <footer class="status">
      <select class="pick zoompick" aria-label="Zoom"><option>25%</option></select>
      <div class="nav"><button aria-label="First artboard"><svg width="10" height="9"><path d="M1 0h1.500v9H1zM9 0v9L3 4.500z"/></svg></button><button aria-label="Previous artboard"><svg width="8" height="9"><path d="M7 0v9L1 4.500z"/></svg></button></div>
      <select class="pick boardpick" aria-label="Artboard"><option>3</option></select>
      <div class="nav off"><button aria-label="Next artboard"><svg width="8" height="9"><path d="M1 0v9l6-4.500z"/></svg></button><button aria-label="Last artboard"><svg width="10" height="9"><path d="M1 0v9l6-4.500zM8 0h1.500v9H8z"/></svg></button></div>
      <span class="mode">Selection</span>
      <button class="play" aria-label="Status menu"><svg width="8" height="9"><path d="M1 0v9l6-4.500z"/></svg></button>
      <div class="hscroll"><svg width="6" height="8"><path d="M5 0 1 4l4 4" fill="none" stroke="#999"/></svg><span class="thumb"></span></div>
    </footer>
  </section>

  <aside class="dock">
    <div class="collapse"><svg width="8" height="6"><use href="#dbl-l"/></svg></div>
    <div class="grp"><button aria-label="Pathfinder"><svg><use href="#p-path"/></svg></button></div>
    <div class="grp"><button aria-label="Export"><svg><use href="#p-exp"/></svg></button></div>
    <div class="grp"><button aria-label="Brushes"><svg><use href="#p-brush"/></svg></button></div>
    <div class="grp"><button aria-label="Swatches"><svg><use href="#p-swatch"/></svg></button></div>
    <div class="grp"><button aria-label="Gradient"><svg><use href="#t-grad"/></svg></button></div>
    <div class="grp"><button class="on" aria-label="Align"><svg><use href="#a-l"/></svg></button></div>
    <div class="grp"><button aria-label="Stroke"><svg><use href="#p-stroke"/></svg></button></div>
    <div class="grp"><button aria-label="Shape modes"><svg><use href="#p-pathf"/></svg></button></div>
  </aside>
  <aside class="dock">
    <div class="collapse"><svg width="8" height="6"><use href="#dbl-l"/></svg></div>
    <div class="grp"><button aria-label="Properties"><svg><use href="#p-prop"/></svg></button><button aria-label="Libraries"><svg><use href="#p-lib"/></svg></button></div>
    <div class="grp"><button aria-label="Paragraph"><svg><use href="#p-para"/></svg></button></div>
    <div class="grp"><button aria-label="Asset export"><svg><use href="#p-asset"/></svg></button></div>
    <div class="grp"><button aria-label="OpenType"><svg><use href="#p-o"/></svg></button></div>
    <div class="grp"><button aria-label="Symbols"><svg><use href="#p-club"/></svg></button></div>
    <div class="grp"><button aria-label="Transparency"><svg><use href="#p-trans"/></svg></button></div>
    <div class="grp"><button aria-label="Character styles"><svg><use href="#p-cha"/></svg></button><button aria-label="Paragraph styles"><svg><use href="#p-paras"/></svg></button></div>
    <div class="grp"><button aria-label="Appearance"><svg><use href="#p-app"/></svg></button></div>
    <div class="grp"><button class="on" aria-label="Character"><svg><use href="#p-char"/></svg></button></div>
    <div class="stub"><svg width="6" height="6"><path d="M4 0 1 3l3 3" fill="none" stroke="#888"/></svg></div>
  </aside>

  <section class="panel transform">
    <div class="ptop"><svg width="8" height="6"><use href="#dbl-l"/></svg><svg width="7" height="7"><use href="#cross"/></svg></div>
    <div class="phead"><h2><svg width="6" height="8"><use href="#updown"/></svg>Transform</h2><svg class="bg" width="10" height="8"><use href="#burger"/></svg></div>
    <div class="tbody">
      <svg class="ref" width="20" height="20" viewBox="0 0 20 20"><path d="M1 1h4v4H1zM8 1h4v4H8zM15 1h4v4h-4zM1 8h4v4H1zM15 8h4v4h-4zM1 15h4v4H1zM8 15h4v4H8zM15 15h4v4h-4zM5 3h3M12 3h3M5 17h3M12 17h3M3 5v3M3 12v3M17 5v3M17 12v3" fill="none" stroke="currentColor"/><path d="M8 8h5v5H8z" fill="#ddd"/></svg>
      <div class="fields">
        <label for="fx">X:</label><input id="fx" type="text" value="-124.179 mm"><label for="fw">W:</label><input id="fw" type="text" value="187.135 mm">
        <label for="fy">Y:</label><input id="fy" type="text" value="209.446 mm"><label for="fh">H:</label><input id="fh" type="text" value="354.913 mm">
        <label for="fr"><svg width="11" height="9" viewBox="0 0 11 9"><path d="M9 1 1 8h9M6 4q2 1 2 4" fill="none" stroke="currentColor" stroke-width="1.300"/></svg>:</label><select id="fr" class="pick"><option>0º</option></select>
        <label for="fs"><svg width="10" height="9"><path d="M4 0h6L6 9H0z"/></svg>:</label><select id="fs" class="pick"><option>0º</option></select>
      </div>
      <svg class="link" width="16" height="18" viewBox="0 0 16 18"><path d="M5 7V4q0-3 3-3t3 3v3M5 10v4q0 3 3 3t3-3v-4M8 6v6M1 2l14 13" fill="none" stroke="currentColor" stroke-width="1.500"/></svg>
    </div>
    <div class="tprops"></div>
    <div class="checks">
      <label><input type="checkbox">Scale C</label>
      <label><input type="checkbox" checked>Scale S</label>
    </div>
  </section>

  <section class="panel char">
    <div class="phead"><svg class="gg" width="10" height="8"><use href="#dbl-r"/></svg><i></i><svg class="bg" width="10" height="8"><use href="#burger"/></svg></div>
    <div class="fonts"><select class="pick" aria-label="Font family"><option></option></select><select class="pick" aria-label="Font style"><option></option></select></div>
    <div class="cgrid">
      <label for="c1"><span class="serif"><small>T</small>T</span></label><span class="combo"><svg class="sp" width="10" height="18"><use href="#spin"/></svg><input id="c1" type="text"><button aria-label="Sizes"><svg width="10" height="10"><use href="#chev"/></svg></button></span>
      <label for="c2"><svg width="18" height="20" viewBox="0 0 18 20"><path d="m8 8 4-7 4 7M9 6h6M8 18l4-7 4 7M9 16h6M6 9.500h11M6 19.500h11M3 6v11M1 8l2-2 2 2M1 15l2 2 2-2" fill="none" stroke="currentColor" stroke-width="1.200"/></svg></label><span class="combo"><svg class="sp" width="10" height="18"><use href="#spin"/></svg><input id="c2" type="text"><button aria-label="Leadings"><svg width="10" height="10"><use href="#chev"/></svg></button></span>
      <label for="c3"><svg width="18" height="18" viewBox="0 0 18 18"><path d="m0 2 4 10L9 1M7 13 12 2l5 11M9 9h6M9 16h7M11 14l-2 2 2 2" fill="none" stroke="currentColor" stroke-width="1.300"/></svg></label><span class="combo"><svg class="sp" width="10" height="18"><use href="#spin"/></svg><input id="c3" type="text" value="Auto"><button aria-label="Kernings"><svg width="10" height="10"><use href="#chev"/></svg></button></span>
      <label for="c4"><svg width="18" height="18" viewBox="0 0 18 18"><path d="M0 0h18v12H0z"/><path d="m2 2 3 8 4-8M8 11l4-9 4 9M9 8h5" fill="none" stroke="#333" stroke-width="1.300"/><path d="M1 15.500h16M3 13.500l-2 2 2 2M15 13.500l2 2-2 2" fill="none" stroke="currentColor"/></svg></label><span class="combo"><svg class="sp" width="10" height="18"><use href="#spin"/></svg><input id="c4" type="text" value="0"><button aria-label="Trackings"><svg width="10" height="10"><use href="#chev"/></svg></button></span>
    </div>
    <div class="cgrid">
      <label for="c5"><svg width="18" height="18" viewBox="0 0 18 18"><path d="M2.500 2v14M.500 4l2-2 2 2M.500 14l2 2 2-2" fill="none" stroke="currentColor" stroke-width="1.200"/><path d="M6 2h12v4h-1l-1-2h-3v11l2 .500V17H9v-1.500l2-.500V4H8L7 6H6z"/></svg></label><span class="combo"><svg class="sp" width="10" height="18"><use href="#spin"/></svg><input id="c5" type="text" value="100%"><button aria-label="Vertical scales"><svg width="10" height="10"><use href="#chev"/></svg></button></span>
      <label for="c6"><svg width="18" height="18" viewBox="0 0 18 18"><path d="M3 0h12v4h-1l-1-2h-3v9l2 .500V13H6v-1.500l2-.500V2H5L4 4H3z"/><path d="M1 15.500h16M3 13.500l-2 2 2 2M15 13.500l2 2-2 2" fill="none" stroke="currentColor" stroke-width="1.200"/></svg></label><span class="combo"><svg class="sp" width="10" height="18"><use href="#spin"/></svg><input id="c6" type="text" value="100%"><button aria-label="Horizontal scales"><svg width="10" height="10"><use href="#chev"/></svg></button></span>
      <label for="c7"><svg width="18" height="18" viewBox="0 0 18 18"><path d="m1 12 4-10 4 10M3 9h5M0 14h10M11 7h5V4q-3-2-4 0M16 5.500q-5-.500-5 1.500M10 9.500h7M14 16v-5M12 13l2-2 2 2" fill="none" stroke="currentColor" stroke-width="1.200"/></svg></label><span class="combo"><svg class="sp" width="10" height="18"><use href="#spin"/></svg><input id="c7" type="text" value="0 mm"><button aria-label="Baseline shifts"><svg width="10" height="10"><use href="#chev"/></svg></button></span>
      <label for="c8"><svg width="18" height="18" viewBox="0 0 18 18"><path d="M13 3.500a7 7 0 1 1-7-.500M10 0l4 3-4 3" fill="none" stroke="currentColor" stroke-width="1.300"/><path d="M5 5h8v2h-1l-1-1h-1v7h1v1H7v-1h1V6H7L6 7H5z"/></svg></label><span class="combo"><svg class="sp" width="10" height="18"><use href="#spin"/></svg><input id="c8" type="text" value="0º"><button aria-label="Rotations"><svg width="10" height="10"><use href="#chev"/></svg></button></span>
    </div>
    <div class="caps"><button>TT</button><button>T<small>T</small></button><button class="gap1">T<sup>1</sup></button><button>T<sub>1</sub></button><button class="gap2"><u>T</u></button><button><s>T</s></button></div>
    <div class="lang"><select class="pick" aria-label="Language"><option>English: USA</option></select><label for="aa"><sup>a</sup>a</label><select id="aa" class="pick"><option>Sharp</option></select></div>
  </section>

  <section class="panel align">
    <div class="phead"><h2><svg width="6" height="8"><use href="#updown"/></svg>Align</h2><svg class="gg" width="10" height="8"><use href="#dbl-r"/></svg><i></i><svg class="bg" width="10" height="8"><use href="#burger"/></svg></div>
    <div class="asec"><h3>Align Objects:</h3>
      <div class="arow"><button aria-label="Left"><svg><use href="#a-l"/></svg></button><button aria-label="Center"><svg><use href="#a-c"/></svg></button><button aria-label="Right"><svg><use href="#a-r"/></svg></button><button aria-label="Top"><svg><use href="#a-t"/></svg></button><button aria-label="Middle"><svg><use href="#a-m"/></svg></button><button aria-label="Bottom"><svg><use href="#a-b"/></svg></button></div></div>
    <div class="asec"><h3>Distribute Objects:</h3>
      <div class="arow"><button aria-label="By top"><svg><use href="#d-t"/></svg></button><button aria-label="By middle"><svg><use href="#d-m"/></svg></button><button aria-label="By bottom"><svg><use href="#d-b"/></svg></button><button aria-label="By left"><svg><use href="#d-l"/></svg></button><button aria-label="By center"><svg><use href="#d-c"/></svg></button><button aria-label="By right"><svg><use href="#d-r"/></svg></button></div></div>
    <div class="asec split">
      <div><h3>Distribute Spacing:</h3><div class="space"><button aria-label="Vertical space"><svg><use href="#s-v"/></svg></button><button aria-label="Horizontal space"><svg><use href="#s-h"/></svg></button><span class="combo"><svg class="sp" width="10" height="18"><use href="#spin"/></svg><input type="text" value="0 mm" disabled aria-label="Spacing"></span></div></div>
      <div class="to"><h3>Align To:</h3><button aria-label="Align to"><svg class="wide"><use href="#artb"/></svg></button></div>
    </div>
  </section>
</main>

<footer class="taskbar">
  <button class="app start" aria-label="Start"><svg width="24" height="24" viewBox="0 0 24 24"><path d="M0 1h11.300v10.500H0zM12.500 1H24v10.500H12.500zM0 12.500h11.300V23H0zM12.500 12.500H24V23H12.500z" fill="url(#win)"/></svg></button>
  <label class="tsearch"><svg width="16" height="20" viewBox="0 0 16 20"><circle cx="7" cy="8" r="5.500" fill="none" stroke="currentColor" stroke-width="1.700"/><path d="m11 13 4 5" stroke="currentColor" stroke-width="1.700"/></svg><input type="text" placeholder="Search" aria-label="Search"><svg width="20" height="26" viewBox="0 0 20 26"><ellipse cx="10" cy="13" rx="9.500" ry="12" fill="#e4f4fd"/><path d="M6 4l3 1v10l5-2-4-2V9l7 4c1 4-2 7-7 9l-4-3z" fill="#1670d2"/></svg></label>
  <nav class="apps">
    <button class="app run" aria-label="File Explorer"><svg width="26" height="32" viewBox="0 0 26 32"><path d="M1 2h9l3 3h12v22H1z" fill="#f0b92e"/><path d="M1 9h24v22H1z" fill="#fbd45e"/><path d="M6 23q0-2 2-2h10q2 0 2 2v8H6z" fill="#1874bb"/><path d="M8 26h10v2H8z" fill="#0b4d85"/></svg></button>
    <button class="app run" aria-label="Word"><svg width="26" height="32" viewBox="0 0 26 32"><path d="M6 1h19v8H6z" fill="#41a5ee"/><path d="M6 9h19v7H6z" fill="#2b7cd3"/><path d="M6 16h19v7H6z" fill="#185abd"/><path d="M6 23h19v8H6z" fill="#103f91"/><path d="M1 9h12v14H1z" fill="#1c56b5"/><text x="1" y="20">W</text></svg></button>
    <button class="app" aria-label="Excel"><svg width="26" height="32" viewBox="0 0 26 32"><path d="M6 1h19v8H6z" fill="#21a366"/><path d="M15 1h10v8H15z" fill="#33c481"/><path d="M6 9h19v14H6z" fill="#107c41"/><path d="M6 23h19v8H6z" fill="#185c37"/><path d="M1 9h12v14H1z" fill="#107c41"/><text x="3" y="20">X</text></svg></button>
    <button class="app" aria-label="PowerPoint"><svg width="26" height="32" viewBox="0 0 26 32"><ellipse cx="14" cy="16" rx="11" ry="15" fill="#d35230"/><path d="M14 1q11 1 11 15H14z" fill="#ff8f6b"/><path d="M1 9h12v14H1z" fill="#c43e1c"/><text x="4" y="20">P</text></svg></button>
    <button class="app" aria-label="Edge"><svg width="26" height="32" viewBox="0 0 26 32"><ellipse cx="13" cy="16" rx="12" ry="15" fill="url(#edge)"/><path d="M9 14c1-6 10-5 10 1 0 3-3 4 0 6 3 1 5-1 6-4-1 9-7 14-13 13-6-3-6-10-3-16z" fill="#0c4f91"/><path d="M10 15c1-4 7-3 7 1-2 4 2 7 6 5-6 6-16 2-13-6z" fill="#13292d"/><circle cx="7" cy="25" r="6" fill="#ccc"/><circle cx="7" cy="23" r="2" fill="#777"/><path d="M3 29q4-7 8 0z" fill="#777"/></svg></button>
    <button class="app" aria-label="Photoshop"><svg width="26" height="32" viewBox="0 0 26 32"><rect x="2" y="2" width="21" height="28" rx="3" fill="#061e2e" stroke="#45bdf5" stroke-width="2"/><text x="5" y="21">Ps</text></svg></button>
    <button class="app sel" aria-label="Illustrator"><svg width="26" height="32" viewBox="0 0 26 32"><path d="M3 2h20v28H3z" fill="#2e1606" stroke="#f28a21" stroke-width="2"/><text x="6" y="21" class="or">Ai</text></svg></button>
    <button class="app" aria-label="CorelDRAW"><svg width="26" height="32" viewBox="0 0 26 32"><ellipse cx="13" cy="17" rx="12" ry="14" fill="#50ae4b"/><ellipse cx="12" cy="18" rx="8" ry="9" fill="#eef8e8"/><ellipse cx="12" cy="19" rx="4" ry="5" fill="#50ae4b"/><path d="m13 16 1-15 4 1-4 14 7-13 3 3z" fill="#fff"/><path d="m14 13 2-11M15 14l6-9" stroke="#e55b3f"/></svg></button>
    <button class="app run" aria-label="Zalo"><svg width="26" height="32" viewBox="0 0 26 32"><ellipse cx="13" cy="17" rx="12" ry="14" fill="#f2f8ff" stroke="#2a7bed" stroke-width="2"/><text x="3" y="21" class="bl">Zalo</text></svg><span class="badge red">5+</span></button>
    <button class="app run" aria-label="Chrome"><svg width="26" height="32" viewBox="0 0 26 32"><ellipse cx="13" cy="17" rx="12" ry="14" fill="#f7c52c"/><path d="M2 11C7-1 21 0 24 11H13l-5 9z" fill="#e34133"/><path d="M2 11q-4 18 10 20l6-10-10 0z" fill="#2da04e"/><ellipse cx="13" cy="17" rx="5.500" ry="7" fill="#3f7de8" stroke="#fff" stroke-width="2"/></svg><span class="badge">N</span></button>
    <button class="app run" aria-label="Foxit PDF"><svg width="26" height="32" viewBox="0 0 26 32"><path d="M1 1h19l5 6v24H1z" fill="#f08a24"/><path d="M20 1v6h5z" fill="#fff"/><path d="M19 8q-12-3-12 6c0 7 10 7 11 0h-5" fill="none" stroke="#fff" stroke-width="3"/><text x="7" y="29" class="pdf">PDF</text></svg></button>
  </nav>
  <div class="tray">
    <svg width="12" height="8"><path d="M1 7l5-5 5 5" fill="none" stroke="currentColor" stroke-width="1.400"/></svg>
    <svg class="t1" width="18" height="12" viewBox="0 0 18 12"><path d="M4 11a4 4 0 0 1-1-7 5 5 0 0 1 9-1 4 4 0 0 1 2 8z" fill="#ccc"/><path d="M5 11.500q-2-4 2-5 5-3 7 0 4 0 3 5z" fill="#fff"/></svg>
    <svg class="t2" width="12" height="16" viewBox="0 0 12 16"><rect x="4" y="1" width="4" height="9" rx="2" fill="#2a7ea5" stroke="#8fd8f7"/><path d="M1 7q0 5 5 5t5-5M6 12v3" fill="none" stroke="#8fd8f7" stroke-width="1.300"/></svg>
    <span class="ime">VIE</span>
    <svg class="t3" width="16" height="12" viewBox="0 0 16 12"><path d="M1 5q7-7 14 0M3 7.500q5-5 10 0M5.500 9.500q2.500-2.500 5 0" fill="none" stroke="currentColor" stroke-width="1.300"/><circle cx="8" cy="11" r="1.200"/></svg>
    <svg class="t4" width="16" height="12" viewBox="0 0 16 12"><path d="M1 4h2.500L7 1v10L3.500 8H1zM9 4q1.500 2 0 4M11 2.500q3 3.500 0 7M13 1q4 5 0 10" fill="none" stroke="currentColor" stroke-width="1.200"/></svg>
    <svg class="t5" width="17" height="12" viewBox="0 0 17 12"><rect x="1" y="1" width="13" height="9" rx="2" fill="none" stroke="currentColor" stroke-width="1.300"/><path d="M3 3h6v5H3zM15 4h1.500v3H15z"/></svg>
    <time class="clock">7:42 AM<br>9/27/2023</time>
    <svg class="t6" width="15" height="16" viewBox="0 0 15 16"><path d="M1 12 2 11V6q1-5 6-4l4 4v5l1 1v1H1zM5 14h5q-2.500 3-5 0z"/><path d="M4 6h2.500L4 9.500h2.500M8 6h2.500L8 9.500h2.500" fill="none" stroke="#13292d"/><path d="M11 1h3l-3 3h3" fill="none" stroke="#fff"/></svg>
  </div>
</footer>
</body>
</html>
```
FILE: styles.css
```
* { box-sizing: border-box; }
body { margin: 0; height: 100vh; min-height: 600px; display: flex; flex-direction: column; overflow: hidden; background: #323232; color: #c4c4c4; font: 11px/14px Lato, "Noto Sans", sans-serif; }
button, input, select { font: inherit; color: inherit; background: none; border: 0; padding: 0; margin: 0; min-width: 0; border-radius: 0; }
svg { display: block; fill: currentColor; flex: none; overflow: hidden; }
h2, h3 { margin: 0; font-size: 11px; line-height: 14px; }
.sprite { position: absolute; width: 0; height: 0; }
.ib { display: flex; align-items: center; }
.dim { color: #555; }

.menubar { height: 31px; flex: none; display: flex; align-items: center; border-bottom: 1px solid #262626; font-size: 12px; color: #d6d6d6; }
.ai-badge { margin-left: 10px; width: 16px; height: 16px; border: 1px solid #e0802a; background: #2c1404; color: #f28a21; font: bold 10px/14px "Open Sans", sans-serif; text-align: center; }
.home { margin-left: 14px; color: #bbb; }
.menu { display: flex; gap: 14px; margin-left: 15px; padding-left: 15px; border-left: 1px solid #292929; }
.layout { gap: 8px; margin-left: 12px; padding-left: 12px; border-left: 1px solid #292929; color: #bbb; }
.menubar-end { margin-left: auto; display: flex; align-items: center; height: 100%; }
.workspace-switch { display: flex; align-items: center; gap: 10px; padding: 2px 13px 2px 12px; border: solid #292929; border-width: 0 1px; color: #a8a8a8; }
.stock { width: 169px; height: 20px; margin-left: 9px; display: flex; align-items: center; gap: 3px; padding-left: 3px; background: #252525; border: 1px solid #3d3d3d; color: #bbb; }
.stock input { flex: 1; }
.stock input::placeholder { color: #8c8c8c; opacity: 1; }
.winctl { display: flex; align-self: flex-start; margin: 0 3px 0 7px; height: 19px; border: solid #3e3e3e; border-width: 0 0 1px 1px; color: #999; }
.winctl button { width: 28px; display: grid; place-items: center; }

.control { height: 34px; flex: none; display: flex; align-items: center; border-bottom: 1px solid #232323; }
.ctx { width: 80px; padding-left: 15px; color: #999; }
.qm { display: flex; align-items: center; gap: 5px; margin-left: 15px; width: 37px; height: 20px; background: linear-gradient(90deg, #323232 20px, #2a2a2a 20px); color: #c8c8c8; }
.qm + .qm { margin-left: 7px; }
.qm b { width: 19px; height: 19px; border: 2px solid #d8d8d8; background: #2a2a2a; font: 14px/15px "Noto Sans", sans-serif; }
.u { border-bottom: 1px solid #aaa; line-height: 13px; color: #c0c0c0; white-space: nowrap; font-weight: 500; }
.bright { color: #ddd; margin-left: 15px; }
.stroke-label { margin-left: 13px; }
.combo { display: flex; align-items: center; height: 20px; border: 1px solid #3c3c3c; background: #262626; color: #b8b8b8; }
.combo .sp { width: 17px; padding: 0 3px; height: 16px; background: #2e2e2e; }
.combo input { flex: 1; width: 20px; height: 100%; padding: 0 3px; }
.combo button { width: 17px; height: 100%; display: grid; place-items: center; border-left: 1px solid #333; }
.stroke-combo { width: 78px; margin-left: 5px; }
.profile { width: 91px; height: 22px; margin: 0 4px 0 7px; background: #676767; border: 1px solid #565656; }
.opacity-label { margin-left: 11px; }
.opacity { width: 66px; margin-left: 3px; }
.turn { transform: rotate(-90deg); }
.globe { margin: 0 20px 0 17px; }
.aligns { display: flex; gap: 9px; margin-left: 12px; color: #b4b4b4; }
.aligns svg { width: 18px; height: 18px; }
.ib + .aligns { margin-left: 15px; }
.control-end { margin-left: auto; display: flex; align-items: center; padding-right: 17px; }
.magnet { margin: 0 5px 0 12px; }
.list { margin-left: 18px; }

.work { flex: 1; min-height: 0; display: flex; position: relative; }
.tools { width: 73px; flex: none; display: flex; flex-direction: column; border-right: 1px solid #242424; color: #b4b4b4; }
.collapse { height: 12px; flex: none; background: #262626; padding: 3px 7px; }
.grip { height: 6px; width: 20px; margin: 2px auto 11px; background: repeating-linear-gradient(90deg, #292929 0 1px, #333 1px 2px); }
.toolgrid { display: grid; grid-template-columns: 30px 30px; grid-auto-rows: 24px; margin-left: 7px; }
.toolgrid button { display: grid; place-items: center; position: relative; }
.toolgrid .on { background: #212121; border: 1px solid #3c3c3c; margin: 0 1px; }
.toolgrid svg { width: 19px; height: 19px; }
.m::after { content: ""; position: absolute; right: 3px; bottom: 2px; border: 2px solid transparent; border-right-color: #999; border-bottom-color: #999; }
.swatches { margin: 4px 0 0 7px; }
.q { font: 10px "Noto Sans", sans-serif; fill: #ddd; }
.big { font-size: 14px; }
.modes { margin: 4px 0 0 7px; background: #292929; }
.draws { margin: 6px 0 0 8px; background: #2b2b2b; }
.screen { margin: 8px 0 0 25px; }
.more { margin: 22px 0 0 29px; }

.doc { flex: 1; min-width: 0; display: flex; flex-direction: column; }
.tabs { height: 29px; flex: none; display: flex; background: #262626; }
.tab { display: flex; align-items: center; gap: 17px; padding: 2px 9px 0 8px; font: 600 11px/14px "Open Sans", "Noto Sans", sans-serif; color: #858585; white-space: nowrap; }
.tab.active { background: #323232; color: #e6e6e6; padding-left: 11px; }
.sheet { flex: 1; min-height: 0; display: grid; grid-template: 12px 1fr / 12px 1fr 17px; }
.hruler { grid-column: 1 / 3; width: 100%; height: 12px; background: #191919; }
.vruler { width: 12px; height: 100%; background: #191919; }
.rl { font: 7px "Noto Sans", sans-serif; fill: #9c9c9c; }
.vscroll { width: 17px; height: 12px; background: #2b2b2b; }
.vtrack { background: #2b2b2b; }
.canvas { width: 100%; height: 100%; background: #383838; }
.e { font: bold 7px "Noto Sans", sans-serif; fill: #d8281f; }
.mai { font: bold 5px "Noto Sans", sans-serif; fill: #1763a6; stroke: #1763a6; stroke-width: 0.4px; }
.status { height: 16px; flex: none; display: flex; align-items: center; background: #2e2e2e; padding-left: 5px; color: #aaa; }
.pick { appearance: none; height: 20px; padding: 0 16px 0 5px; border: 1px solid #3c3c3c; background: #262626 url("data:image/svg+xml,%3Csvg xmlns='http://www.w3.org/2000/svg' width='10' height='10'%3E%3Cpath d='M1.500 3 5 6.500 8.500 3' fill='none' stroke='%23c8c8c8' stroke-width='1.500'/%3E%3C/svg%3E") no-repeat right 4px center; }
.status .pick { height: 16px; line-height: 14px; padding-left: 2px; border-width: 0; }
.zoompick { width: 67px; }
.boardpick { width: 55px; }
.nav { display: flex; gap: 8px; padding: 0 8px; width: 45px; }
.off { color: #555; }
.mode { width: 195px; text-align: center; background: #323232; line-height: 16px; }
.play { margin: 0 9px 0 10px; color: #c8c8c8; }
.hscroll { flex: 1; display: flex; align-items: center; height: 100%; background: #262626; padding-left: 1px; }
.thumb { width: 24px; height: 13px; border-radius: 7px; background: #444; margin-left: auto; margin-right: 204px; }

.dock { width: 38px; flex: none; border-left: 2px solid #222; color: #b4b4b4; }
.dock + .dock { width: 41px; }
.dock .collapse { display: flex; justify-content: flex-end; padding: 3px 5px; }
.grp { border-bottom: 1px solid #242424; padding: 1px 0 2px; }
.grp::before { content: ""; display: block; width: 20px; height: 4px; margin: 2px auto 4px; background: #292929; }
.grp button { display: grid; place-items: center; width: 27px; height: 27px; margin: 0 auto; }
.grp button svg { width: 19px; height: 19px; }
.grp .on { background: #1d1d1d; }
.stub { width: 7px; height: 50px; border: solid #262626; border-width: 0 1px 1px 0; padding-top: 2px; }

.panel { position: absolute; width: 231px; background: #323232; border: 1px solid #1f1f1f; box-shadow: 0 0 2px #1a1a1a; }
.phead { display: flex; align-items: center; height: 27px; background: #262626; padding-right: 5px; color: #aaa; }
.phead h2 { display: flex; align-items: center; gap: 5px; height: 100%; background: #323232; padding: 0 8px 0 4px; color: #eee; }
.phead i { width: 1px; height: 10px; background: #777; margin: 0 7px 0 6px; }
.phead .bg, .phead .gg { margin-left: auto; color: #999; }
.phead i + .bg { margin-left: 0; }
.transform { top: 41px; right: 132px; height: 320px; }
.ptop { height: 12px; display: flex; justify-content: flex-end; align-items: center; gap: 9px; padding-right: 5px; background: #2b2b2b; color: #aaa; }
.tbody { display: flex; padding: 7px 10px 0 3px; }
.ref { margin-top: 12px; }
.fields { display: grid; grid-template-columns: 23px 57px 23px 57px; grid-auto-rows: 20px; row-gap: 6px; margin-left: 5px; color: #b8b8b8; }
.fields label { display: flex; align-items: center; justify-content: flex-end; gap: 1px; padding-right: 4px; color: #999; }
.fields input { border: 1px solid #3a3a3a; background: #282828; padding: 0 0 0 2px; }
.fields .pick { padding-left: 1px; }
.link { margin: 14px 0 0 9px; color: #aaa; }
.tprops { margin: 7px 4px 7px 11px; height: 147px; border: solid #2a2a2a; border-width: 1px 0; }
.checks { width: 46px; margin-left: 5px; display: grid; gap: 6px; color: #b4b4b4; overflow: hidden; }
.checks label { display: flex; align-items: center; gap: 3px; width: 46px; height: 14px; overflow: hidden; white-space: nowrap; }
.checks input { appearance: none; flex: none; width: 12px; height: 12px; border: 1px solid #888; border-radius: 2px; }
.checks input:checked { background: #aaa url("data:image/svg+xml,%3Csvg xmlns='http://www.w3.org/2000/svg' width='10' height='10'%3E%3Cpath d='M2 5 4 8 8 2' fill='none' stroke='%23222' stroke-width='1.500'/%3E%3C/svg%3E"); }

.align { top: 216px; right: 80px; height: 206px; }
.asec { padding: 7px 0 0 5px; height: 59px; border-bottom: 1px solid #2a2a2a; }
.asec:nth-child(2) { height: 60px; padding-top: 8px; }
.asec:nth-child(2) .arow { padding-top: 9px; }
.asec:last-child { border: 0; }
.asec h3 { font-weight: 400; color: #9c9c9c; white-space: nowrap; }
.arow { display: grid; grid-template-columns: 36px 37px 50px 36px 35px 18px; padding: 10px 0 0 4px; color: #b4b4b4; }
.asec button { height: 18px; }
.asec button svg { width: 18px; height: 18px; }
.asec button .wide { width: 26px; }
.split { display: flex; justify-content: space-between; padding-top: 0; }
.split > div { padding-top: 7px; }
.space { display: flex; align-items: center; gap: 13px; padding: 8px 0 0 4px; }
.space .combo { width: 78px; background: #2e2e2e; border-color: #303030; color: #555; margin-left: -4px; }
.space input { color: #555; }
.to { width: 65px; border-left: 1px solid #2a2a2a; padding-right: 6px; display: flex; flex-direction: column; align-items: flex-end; gap: 9px; }
.to button { margin-right: 7px; }

.char { top: 333px; right: 40px; height: 265px; }
.char .phead { height: 29px; }
.fonts { display: grid; gap: 6px; padding: 6px 5px 9px; }
.cgrid { display: grid; grid-template-columns: 21px 81px 36px 81px; row-gap: 6px; padding: 4px 5px 6px; border-bottom: 1px solid #2a2a2a; align-items: center; }
.cgrid label { justify-self: end; margin-right: 3px; color: #b0b0b0; }
.cgrid + .cgrid { padding-top: 6px; padding-bottom: 5px; }
.serif, .caps { font: 18px/18px "Liberation Serif", serif; color: #b4b4b4; }
.serif small { font-size: 12px; }
.caps { display: flex; align-items: center; height: 28px; padding: 0 9px; gap: 12px; font-size: 15px; border-bottom: 1px solid #2a2a2a; }
.caps small, .caps sup, .caps sub { font-size: 9px; line-height: 0; }
.caps small { font-size: 12px; }
.gap1 { margin-left: 26px; }
.gap2 { margin-left: 33px; }
.caps button:last-child { margin-left: 8px; }
.lang { display: grid; grid-template-columns: 102px 36px 81px; padding: 6px 5px 5px; align-items: center; }
.lang label { text-align: center; font-size: 12px; line-height: 12px; }
.lang sup { font-size: 10px; line-height: 0; }

.taskbar { height: 47px; flex: none; display: flex; align-items: center; background: #13292d; border-top: 1px solid #2f4447; color: #fff; padding: 0 16px 2px 10px; font-family: "Noto Sans", sans-serif; }
.app { width: 44px; height: 44px; display: grid; place-items: center; position: relative; }
.app text { font: bold 12px "Noto Sans", sans-serif; fill: #fff; }
.app .or { fill: #f28a21; }
.app .bl { font-size: 9px; fill: #1b6fe0; }
.app .pdf { font-size: 7px; }
.app svg { height: 28px; }
.start svg { height: 24px; }
.tsearch { width: 219px; height: 32px; margin: 0 2px 0 4px; display: flex; align-items: center; gap: 9px; padding: 0 6px 0 10px; border: 1px solid #4a5e62; border-radius: 16px; background: #2f4649; }
.tsearch input { flex: 1; font-size: 13px; }
.tsearch input::placeholder { color: #d3dadb; opacity: 1; }
.apps { display: flex; }
.run::after, .sel::after { content: ""; position: absolute; bottom: 3px; left: 19px; width: 6px; height: 3px; border-radius: 2px; background: #96a3a5; }
.sel { background: #22393d; border-radius: 4px; }
.sel::after { left: 14px; width: 16px; background: #5bb9ee; }
.badge { position: absolute; left: 24px; top: 6px; width: 16px; height: 16px; border-radius: 8px; background: #8a7470; font-size: 10px; line-height: 16px; text-align: center; }
.red { background: #e81c1c; }
.tray { margin-left: auto; display: flex; align-items: center; font-size: 12px; }
.t1 { margin-left: 17px; }
.t2 { margin-left: 18px; }
.ime { margin-left: 23px; }
.t3 { margin-left: 21px; }
.t4, .t5 { margin-left: 8px; }
.clock { margin-left: 10px; line-height: 16px; text-align: right; width: 60px; display: flex; flex-direction: column; white-space: nowrap; }
.t6 { margin: 0 4px 0 9px; }
```
